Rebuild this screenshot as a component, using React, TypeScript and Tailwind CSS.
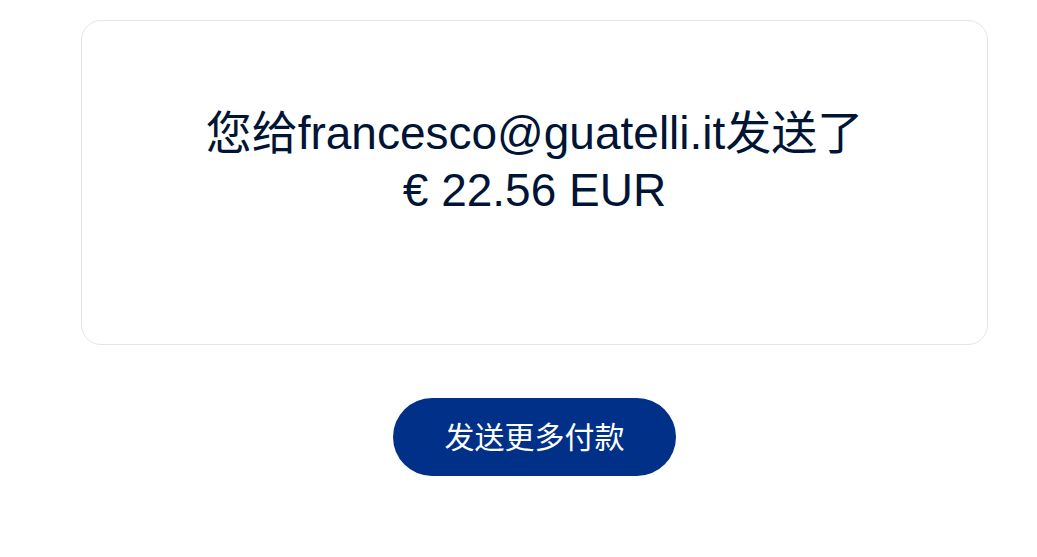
import React from "react";

export default function App() {
    return (
        <div className="min-h-[557px] bg-white font-['Liberation_Sans','Noto_Sans_CJK_SC',sans-serif]">
            <div className="ml-[81px] w-[907px] pt-5">
                <div className="h-[325px] rounded-[20px] border border-[#e5e5e5] bg-white pt-[84px] text-center">
                    <p className="text-[46px] leading-[57px] text-[#001435]">
                        您给francesco@guatelli.it发送了
                        <br />
                        € 22.56 EUR
                    </p>
                </div>
                <div className="mt-[53px] flex justify-center">
                    <button className="h-[78px] w-[283px] rounded-full bg-[#003087] text-[30px] text-white">
                        发送更多付款
                    </button>
                </div>
            </div>
        </div>
    );
}
